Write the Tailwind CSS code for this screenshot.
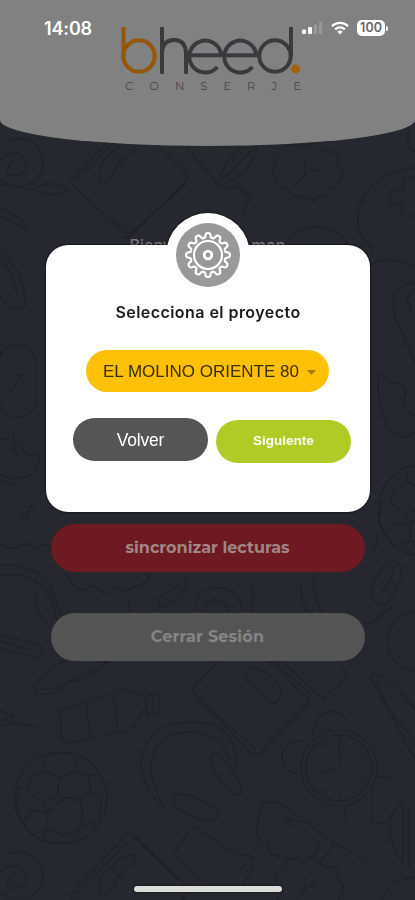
<!DOCTYPE html>
<html lang="es">
<head>
    <meta charset="UTF-8">
    <meta name="viewport" content="width=device-width, initial-scale=1.0">
    <title>Bheed Conserje</title>
    <script src="https://cdn.jsdelivr.net/npm/@tailwindcss/browser@4"></script>
</head>
<body class="bg-[#26272f] font-['Inter',sans-serif]">
    <div class="relative w-[415px] h-[900px] overflow-hidden flex flex-col">
        <!-- Doodle wallpaper -->
        <svg class="absolute inset-0" width="415" height="900" viewBox="0 0 415 900" fill="none" stroke="#202128" stroke-width="1.2" stroke-linejoin="round" stroke-linecap="round">
            <defs>
                <g id="ball">
                    <circle r="46"/>
                    <path d="M-2-20L-16-28-31-20-33-7-19 4-3-2zM-2-20l15-7 14 5 3 16-10 7-23-3M-19 4l6 10-1 16 15 7 17-5 4-16-4-15-15-1-16 14M-33-7l-9-4M-16-28l-3-15 32-2 4 17M27-22l12-2M30-6l11 5-3 23-16 5M-14 30l-5 8 6 6h25l6-7-17 0M-14 14l-16-1-8 12 9 12 15-7M-42-11l-3 23 7 13"/>
                </g>
                <g id="device">
                    <path d="M0 30L53-27q5-5 10 0L113 22q5 5 0 10L62 81q-5 5-10 0L1 36q-3-3-1-6zM5 30L55-21M113 34L60 85q-5 4-9 1"/>
                    <path d="M28 30q-3-16 12-28T62-8q3 7-8 15T42 24q-10 12-14 6M40 5l10 9"/>
                </g>
                <g id="leafy">
                    <path d="M0-28q8-8 14 0t14 4q8 5 4 13 9 5 4 14 0 9-10 10-2 10-12 8-8 9-16 0-12 3-15-7-11 1-11-10-9-7-1-14-4-10 7-12 3-14 22-6zM-8 8L10-10M0 0v-13M4-4h13"/>
                </g>
                <path id="swirl" d="M-15-20q25-6 34 7t1 29q-12 12-28 8t-15-15 13-16 16 7-8 14-9-7 7-7"/>
            </defs>
            <use href="#swirl" x="19" y="161"/>
            <use href="#swirl" x="19" y="874"/>
            <use href="#device" x="72" y="150"/>
            <use href="#device" x="72" y="863"/>
            <use href="#leafy" x="305" y="175"/>
            <use href="#leafy" x="305" y="890"/>
            <path d="M0 184q20 4 35 5 6-6 18-5t15 5q-8 8-21 5t-12-5M0 207q12 6 28 18l-3 4Q10 220 0 216"/>
            <path d="M186 147l32 38q5 4 20 2l12 10-7 18M218 183q5-20 21-34l18-3q-2 15-14 26t-24 15M223 179l28-28"/>
            <path d="M415 168q-28 2-45 20t-11 45l14 17M415 178h-12v12h-12l-2 14h13v12h13M288 240q18-18 40-11t20 24M408 110v38l7 4"/>
            <path d="M0 253q14 8 20 25t5 26q-8 8-15 3T0 296M3 262q12 16 15 36M0 358q3-14 18-13t18 15v44q-6 14-20 13T1 404M10 376l12-1-12 17 9 1"/>
            <path d="M0 440q14-4 22 8t16 5q3 12-4 20-16 10-34 2M10 444l10 15M13 430l2 22M0 480l14 5M20 520l14-15-14 3M31 505l-4 14M0 544q11 7 19 2t17 3q9-8 17 0l2-13"/>
            <path d="M0 565q34-2 50 20l10 28M0 576q26-4 39 8t18 36M37 593q-4 15 8 29M45 590q10 4 9 22M0 635l40 10q5 8-3 13L0 648M0 641l30 9"/>
            <path d="M68 575q4 15 18 15 5-7 13-2 6 10 16-1 10 8 20-1 12 0 15-12M160 597q16-10 28-18-2 12-14 21l-16 8zM129 600l1 14M196 610q-2-20 20-22t26 20M205 612q2-14 13-12t9 14M250 580q5 15 1 32M302 580q-4 15 6 33M314 575q-2 22 8 38"/>
            <path d="M388 560q10-3 13 8t-12 32q-10 10-16-1t15-39zM392 567q4 12-12 26M368 625l24-18M415 612q-24 2-27 27t27 32M376 537q2 10-4 14"/>
            <path d="M363 270q20-18 52-3M397 292q8-12 18-8M395 292q-4 26 5 36l15 35M372 370l22 14q10-2 12 7l-3 14q8 10 12 11M378 375q0 40 12 55 10 14 25 2M415 290l-8 8 4 14"/>
            <use href="#ball" x="424" y="510"/>
            <use href="#ball" x="61" y="798"/>
            <!-- bottle -->
            <path d="M60 710l30-8 36-13 18 8 7-4 8 2v18l-10 1-4-6-14 22-22 4-42 9q-7-2-6-16zM86 704l5 36M112 694q6 17 5 38M145 696l3 18M152 694l2 18"/>
            <!-- boot and pen -->
            <path d="M34 686q14-18 34-27l46-3q-22 22-44 26-18 15-34 12zM36 690l20-2 53-28M0 710l15 7-12 3 35 8M0 726q16-3 30-1"/>
            <!-- tablet -->
            <path d="M218 662l-23 24q-4 4 0 9l55 57q6 5 11 0l45-47q4-4 0-8l-38-38M197 698l58 51M272 660l38 34-3 12M245 674q2-9 14-5t22 20q0 12-7 15-8-2-15-15-13-6-14-15M285 664l37 35q15-13 26-24l-6-9"/>
            <!-- headphones -->
            <path d="M165 808q-26-22-24-50 8-36 52-36t44 44M165 808q-14-22-14-42 4-36 42-34 36 4 38 38M212 755q6-4 16 10l14 22q-1 10-8 8l-14-14q-9-16-8-26zM175 794q20-2 43 18-2 10-11 9-22-4-34-18z"/>
            <!-- alarm clock -->
            <circle cx="339" cy="768" r="38"/><circle cx="339" cy="768" r="33"/>
            <path d="M339 741l1 27-19 4M313 736q0-22 20-25 12 3 13 10M297 774q-18-5-14-22 7-13 22-11M378 776l12 2M345 808v12M339 738v3M368 768h-3M339 797v-3M310 768h3M323 743l2 3M354 743l-2 3M364 753l-3 2M364 783l-3-2M354 793l-2-3M323 793l2-3M314 783l3-2M314 753l3 2"/>
            <!-- racket and plants -->
            <path d="M415 740q-30-30-44-62 1-6 7-3 21 11 27 22l10 12M376 682q14 32 39 77M372 798v24l17 3q3-17 15-23M390 822q-2 22 12 40M403 806v60M409 806v60"/>
            <path d="M262 804q9-6 24 3l40 30 38 24M262 804q-4 14-5 26t11 15q-1 12 14 11 10 6 20-1 15 6 16-12M284 820l20 2M292 827l-5-12M335 842l-15 22M174 855l16-26q6-3 12 3l35 22 18 3q-7 22-12 27M174 855l26 26M238 872l15-15"/>
            <path d="M380 900q14-22 35-23M133 837l48 45"/>
        </svg>

        <!-- Header -->
        <header class="relative h-[146px] shrink-0 bg-[#818181] rounded-b-[50%_26px]">
            <div class="flex items-center justify-between h-5 mt-[18px] pl-11 pr-[27px]">
                <span class="text-white text-[18px] leading-5 font-semibold tracking-[-0.15px] translate-y-px">14:08</span>
                <div class="flex items-center gap-2">
                    <svg width="22" height="14" viewBox="0 0 22 14" fill="#fff">
                        <rect x="1" y="8.5" width="4" height="4.5" rx="1.2"/>
                        <rect x="7" y="6" width="4" height="7" rx="1.2"/>
                        <rect x="12.7" y="3.5" width="3.2" height="9.5" rx="1.2" fill="#999"/>
                        <rect x="18" y="1" width="3.2" height="12" rx="1.2" fill="#999"/>
                    </svg>
                    <svg width="18" height="14" viewBox="0 0 18 14" fill="none" stroke="#fff" stroke-width="2.4">
                        <path d="M1 5.2a11.4 11.4 0 0 1 16 0M4.2 8.4a6.8 6.8 0 0 1 9.6 0"/>
                        <path d="M9 13.4L6.4 10.8a3.7 3.7 0 0 1 5.2 0z" fill="#fff" stroke="none"/>
                    </svg>
                    <div class="flex items-center">
                        <span class="w-[28px] h-4 rounded-[5px] bg-white text-[#666] text-[12.5px] leading-4 font-semibold text-center">100</span>
                        <span class="w-[2px] h-[5px] ml-px rounded-r-full bg-white"></span>
                    </div>
                </div>
            </div>
            <div class="absolute left-[121px] top-[26px] w-[180px]">
                <svg width="180" height="50" viewBox="121 26 180 50" fill="none" stroke="#3a3a3c" stroke-width="4">
                    <g stroke="#965705">
                        <path d="M123.5 27v29"/>
                        <circle cx="139" cy="56" r="15.7"/>
                    </g>
                    <path d="M162 27v47M162 52q1-12 12-12 12 0 12 14v20"/>
                    <path d="M189 55.2h32.2a16 16 0 1 0-3.8 11.8M224 55.2h32.2a16 16 0 1 0-3.8 11.8"/>
                    <circle cx="275" cy="56" r="15.7"/>
                    <path d="M291 27v29"/>
                    <circle cx="295.7" cy="69" r="4.4" fill="#a85e04" stroke="none"/>
                </svg>
                <div class="flex justify-between pl-[4px] h-[14px] mt-[3px] font-['Montserrat','Lato',sans-serif] text-[11.5px] leading-[14px] text-[#484848]">
                    <span>C</span><span>O</span><span>N</span><span>S</span><span>E</span><span>R</span><span>J</span><span>E</span>
                </div>
            </div>
        </header>

        <!-- Dimmed screen behind the dialog -->
        <main class="relative flex flex-col items-center">
            <p class="mt-[87px] h-6 w-[156px] flex justify-between text-[16px] leading-6 font-semibold text-[#77787b]"><span class="font-medium">Bienvenido</span><span>mon</span></p>
            <div class="mt-[267px] w-[314px] h-[48px] rounded-full bg-[#6f1922] text-[#a08684] font-['Montserrat','Noto_Sans',sans-serif] text-[16px] font-bold flex items-center justify-center">sincronizar lecturas</div>
            <div class="mt-[41px] w-[314px] h-[48px] rounded-full bg-[#545454] text-[#858585] font-['Montserrat','Noto_Sans',sans-serif] text-[16px] font-bold flex items-center justify-center"><span class="tracking-[0.2px]">Cerrar Sesión</span></div>
        </main>

        <!-- Dialog -->
        <div class="absolute left-[46px] top-[213px] w-[324px] flex flex-col items-center drop-shadow-[0_0_1px_#000]">
            <div class="size-[84px] rounded-full bg-white flex items-center justify-center shrink-0">
                <svg class="relative z-10" width="64" height="64" viewBox="-32 -32 64 64" fill="none" stroke="#fff" stroke-width="2.2" stroke-linejoin="round">
                    <circle r="32" fill="#999" stroke="none"/>
                    <path id="gear"/>
                    <circle r="14"/>
                    <circle r="3.8" stroke-width="2.8"/>
                </svg>
            </div>
            <div class="-mt-[52px] w-full h-[267px] rounded-[22px] bg-white flex flex-col items-center">
                <h1 class="mt-[55px] h-6 text-[16px] leading-6 font-semibold tracking-[0.45px] text-[#1a1a1a] whitespace-nowrap">Selecciona el proyecto</h1>
                <div class="mt-[26px] w-[243px] h-[42px] -ml-px rounded-full bg-[#ffc107] flex items-center pl-[17px] pr-[13px] justify-between font-['Liberation_Sans',sans-serif] text-[17px] text-[#3a2d08] whitespace-nowrap">
                    <span class="translate-y-px">EL MOLINO ORIENTE 80</span>
                    <svg class="translate-y-px" width="9" height="5" viewBox="0 0 9 5" fill="#a37d12"><path d="M0 0h9L4.500 5z"/></svg>
                </div>
                <div class="mt-[26px] ml-2 flex gap-2 font-['Liberation_Sans',sans-serif] text-white">
                    <div class="w-[135px] h-[43px] rounded-full bg-[#555] flex items-center justify-center text-[17.5px]"><span class="tracking-[-0.2px] translate-y-px">Volver</span></div>
                    <div class="mt-[2px] w-[135px] h-[43px] rounded-full bg-[#b0cb25] flex items-center justify-center text-[13.5px] font-bold">Siguiente</div>
                </div>
            </div>
        </div>

        <!-- Home indicator -->
        <div class="absolute left-[134px] bottom-[8px] w-[148px] h-[6px] rounded-full bg-[#dcddd8] shadow-[0_0_2px_#000]"></div>
    </div>

    <script>
        // 12-tooth gear outline with rounded teeth
        let d = '';
        for (let i = 0; i <= 240; i++) {
            const a = i / 240 * Math.PI * 2;
            const r = 19.7 + 2.3 * Math.tanh(2 * Math.cos(12 * a));
            d += (i ? 'L' : 'M') + (r * Math.sin(a)).toFixed(2) + ' ' + (-r * Math.cos(a)).toFixed(2);
        }
        document.getElementById('gear').setAttribute('d', d + 'Z');
    </script>
</body>
</html>
